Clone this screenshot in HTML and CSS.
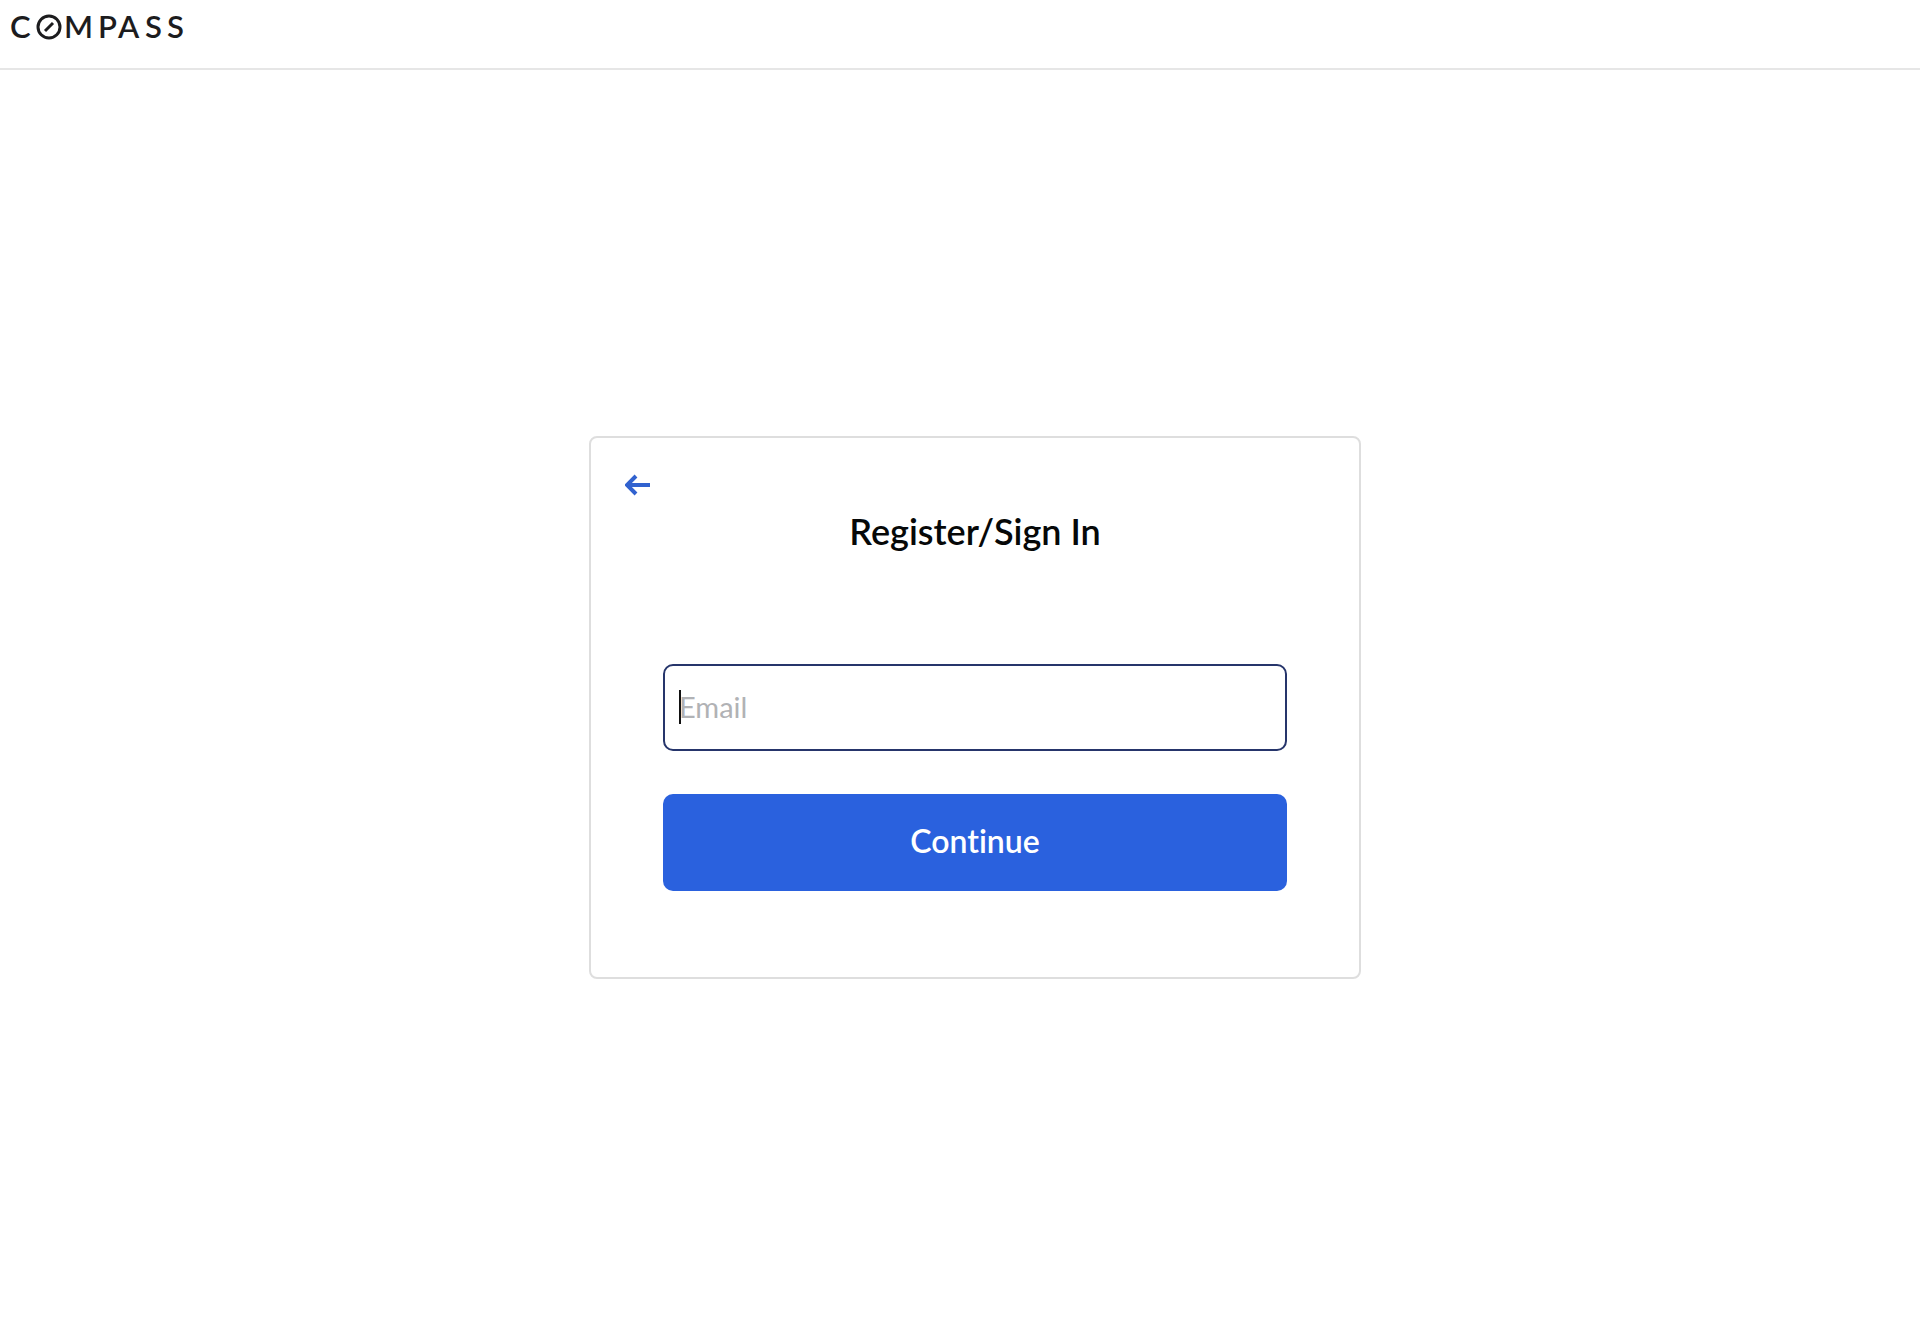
FILE: index.html
```html
<!DOCTYPE html>
<html lang="en">
<head>
  <meta charset="utf-8">
  <meta name="viewport" content="width=device-width, initial-scale=1">
  <title>Register/Sign In - Compass</title>
  <link rel="stylesheet" href="styles.css">
</head>
<body>
  <header class="site-header">
    <a class="logo" href="#" aria-label="Compass">
      <svg class="logo-mark" viewBox="0 0 188 42" aria-hidden="true">
        <text class="logo-text" x="10 64 98 118 145 167" y="38">CMPASS</text>
        <circle cx="49" cy="27" r="11" fill="none" stroke="#1c1c1e" stroke-width="3"/>
        <path d="M45 31L53 23" fill="none" stroke="#1c1c1e" stroke-width="3"/>
      </svg>
    </a>
  </header>
  <main class="page">
    <section class="card">
      <button class="back" type="button" aria-label="Back">
        <svg viewBox="0 0 28 24" aria-hidden="true">
          <path d="M25 13H3M11 4L2 13L11 22" fill="none" stroke="#3162cf" stroke-width="4"/>
        </svg>
      </button>
      <h1 class="title">Register/Sign In</h1>
      <form class="form">
        <div class="field">
          <input class="input" type="email" name="email" placeholder="Email" aria-label="Email">
        </div>
        <button class="submit" type="submit">Continue</button>
      </form>
    </section>
  </main>
</body>
</html>
```
FILE: styles.css
```css
* {
  box-sizing: border-box;
}

body {
  margin: 0;
  min-height: 100vh;
  display: flex;
  flex-direction: column;
  background: #fff;
  color: #060808;
  font-family: Lato, "Liberation Sans", sans-serif;
}

.site-header {
  display: flex;
  padding-bottom: 26px;
  border-bottom: 2px solid #e6e6e6;
}

.logo {
  display: flex;
}

.logo-mark {
  width: 188px;
  height: 42px;
  overflow: visible;
}

.logo-text {
  font-size: 31px;
  font-weight: 600;
  fill: #1c1c1e;
}

.page {
  flex: 1;
  display: flex;
  align-items: center;
  justify-content: center;
  padding: 7px 0 0 30px;
}

.card {
  width: 100%;
  max-width: 772px;
  padding: 34px 72px 86px;
  border: 2px solid #dedede;
  border-radius: 8px;
}

.back {
  display: block;
  width: 28px;
  height: 24px;
  margin-left: -38px;
  padding: 0;
  border: 0;
  background: none;
  cursor: pointer;
}

.back svg {
  display: block;
}

.title {
  margin: 13px 0 111px;
  font-size: 36px;
  line-height: 44px;
  font-weight: 600;
  text-align: center;
}

.form {
  display: flex;
  flex-direction: column;
  gap: 43px;
}

.field {
  position: relative;
}

.field:has(:placeholder-shown)::before {
  content: "";
  position: absolute;
  top: 26px;
  left: 16px;
  width: 2px;
  height: 34px;
  background: #111;
}

.input {
  display: block;
  width: 100%;
  height: 87px;
  padding: 0 14px 2px;
  border: 2px solid #26356b;
  border-radius: 10px;
  outline: 0;
  background: #fff;
  font-family: inherit;
  font-size: 29px;
}

.input::placeholder {
  color: #b1b2b5;
}

.submit {
  height: 97px;
  padding: 0 0 4px;
  border: 0;
  border-radius: 10px;
  background: #2a61de;
  color: #fff;
  font-family: inherit;
  font-size: 32px;
  font-weight: 600;
  font-variant-ligatures: none;
  cursor: pointer;
}
```
